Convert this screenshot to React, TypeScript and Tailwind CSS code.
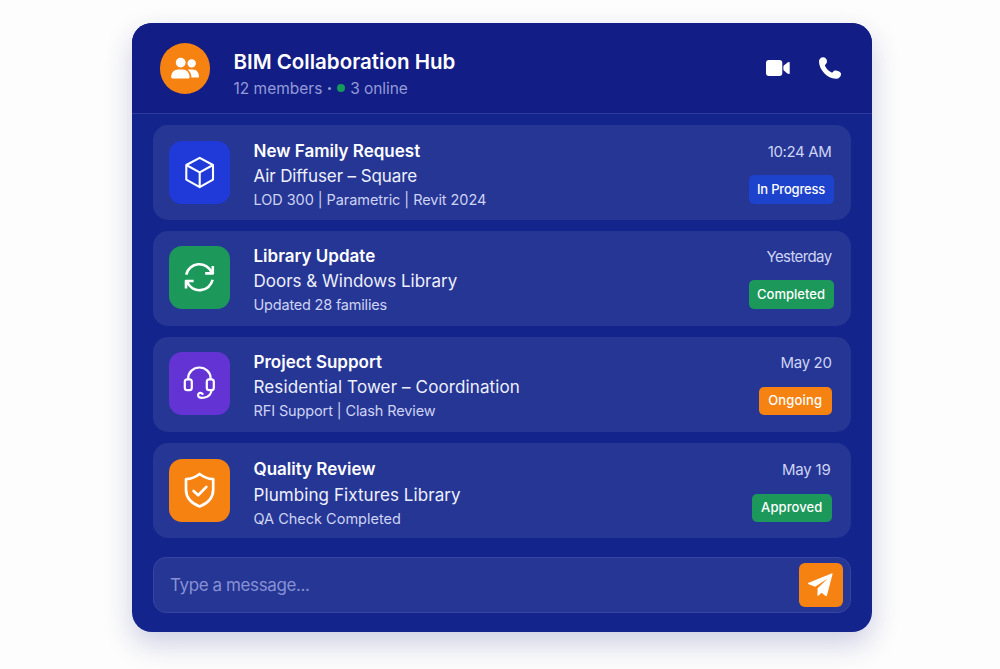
import type { ReactNode } from "react"

type Item = {
  title: string
  subtitle: string
  detail: string
  time: string
  status: string
  icon: ReactNode
  card: string
  tile: string
  textClass: string
  subtitleClass: string
  detailClass: string
  timeClass: string
  badge: string
}

function CubeIcon() {
  return (
    <svg viewBox="0 0 61 63" className="size-full" fill="none" stroke="white" strokeWidth="2.1" strokeLinejoin="round" strokeLinecap="round">
      <path d="M30.7 16.8 44 24v14.6l-13.3 7.6L17.3 38.6V24zM17.3 24l13.4 7.3L44 24M30.7 31.3v14.9" />
    </svg>
  )
}

function SyncIcon() {
  return (
    <svg viewBox="0 0 61 63" className="size-full" fill="none" stroke="white" strokeWidth="2.6" strokeLinejoin="round">
      <path d="M17.2 28.6A13.4 13.4 0 0 1 42.6 26.4M43.8 20v7.4h-7.6" />
      <path d="M43.6 33.8A13.4 13.4 0 0 1 18.2 36M17 42.4V35h7.6" />
    </svg>
  )
}

function HeadsetIcon() {
  return (
    <svg viewBox="0 0 61 63" className="size-full" fill="none" stroke="white" strokeWidth="2.2" strokeLinecap="round" strokeLinejoin="round">
      <rect x="15.8" y="27.3" width="7" height="10.9" rx="2.4" />
      <rect x="37.8" y="27.3" width="7" height="10.9" rx="2.4" />
      <path d="M19.2 27v-.7a11.2 10.8 0 0 1 22.4 0v.7" />
      <path d="M42.6 38.4c-.6 3.8-3 6.300-6.800 7.100-2 .4-4.400.5-5.600-.2-1.500-.9-1.600-3.500.2-4.300 1.300-.5 2.200.1 3.200.8" />
    </svg>
  )
}

function ShieldIcon() {
  return (
    <svg viewBox="0 0 61 63" className="size-full" fill="none" stroke="white" strokeWidth="2.7" strokeLinecap="round" strokeLinejoin="round">
      <path d="M30.6 15c4 3.1 8.6 4.8 13.6 5.2v10.3c0 7.8-5.2 13.7-13.6 17-8.4-3.3-13.6-9.2-13.6-17V20.2c5-.4 9.6-2.1 13.6-5.2z" />
      <path d="m24.6 31.9 4.6 4.3 8.1-8.3" />
    </svg>
  )
}

function PeopleIcon() {
  return (
    <svg viewBox="0 0 50 51" className="size-full" fill="white">
      <circle cx="20.7" cy="19.6" r="4.9" />
      <circle cx="31.7" cy="20.4" r="4.2" />
      <path d="M11.2 34.2c0-4.7 3-7.6 7-7.6h4.2c4.2 0 7.2 2.9 7.2 7.6 0 .8-.4 1.200-1.200 1.200h-16c-.8 0-1.200-.4-1.200-1.200z" />
      <path d="M27.800 26.800c.8-.3 1.500-.4 2.600-.4h2.200c3.800 0 6.400 2.800 6.400 7 0 .8-.3 1.200-1.100 1.200h-6.500c0-3.300-1.300-6.200-3.600-7.800z" />
    </svg>
  )
}

function VideoIcon() {
  return (
    <svg viewBox="0 0 24 16" className="h-4 w-6" fill="white">
      <rect width="16.3" height="16" rx="3" />
      <path d="M17.7 5.6c2-1.500 3.500-3 4.900-3.600.6-.3 1.100 0 1.100.7v10.600c0 .7-.5 1-1.100.7-1.400-.6-2.900-2.100-4.900-3.600-.5-.9-.5-3.900 0-4.800z" />
    </svg>
  )
}

function PhoneIcon() {
  return (
    <svg viewBox="0 0 22 22" className="ml-[29px] size-[22px]" fill="white">
      <path d="M0 4.600C0 2 1.900.2 4 .2 6.300.2 8 2 8 4.200c0 1.400-.6 2.400-1.500 3.200-.6.600-.7 1.100-.3 1.900 1.300 2.500 3.200 4.500 5.900 6 .7.4 1.200.3 1.800-.4.900-1 1.900-1.500 3.300-1.300 1.900.3 4.500 1.500 4.800 2.900.3 1.700-1.300 5.300-5.200 5.300C8.400 21.800 0 12.900 0 4.600z" />
    </svg>
  )
}

function SendIcon() {
  return (
    <svg viewBox="0 0 25 24" className="h-6 w-[25px]" fill="white">
      <path d="M.6 9.700 23.500.4c.8-.3 1.200.1 1 .9L19 22.300c-.3 1-.9 1.200-1.700.5l-3.700-3-3 2.700c-.7.6-1.200.4-1.200-.5l.2-6.800L19.800 5.600 7.200 13.800.7 11.200c-.9-.4-.9-1.100-.1-1.500z" />
    </svg>
  )
}

const items: Item[] = [
  {
    title: "New Family Request",
    subtitle: "Air Diffuser – Square",
    detail: "LOD 300 | Parametric | Revit 2024",
    time: "10:24 AM",
    status: "In Progress",
    icon: <CubeIcon />,
    card: "mb-[11px] h-[95px] pt-[14px]",
    tile: "mt-[2px] bg-[#203ad9]",
    textClass: "",
    subtitleClass: "tracking-[-0.11px]",
    detailClass: "tracking-[-0.06px]",
    timeClass: "tracking-[-0.35px]",
    badge: "mt-[11px] w-[85px] bg-[#1d42cc] tracking-[-0.2px]",
  },
  {
    title: "Library Update",
    subtitle: "Doors & Windows Library",
    detail: "Updated 28 families",
    time: "Yesterday",
    status: "Completed",
    icon: <SyncIcon />,
    card: "mb-[11px] h-[94.5px] pt-[13px]",
    tile: "mt-[2px] bg-[#1c985a]",
    textClass: "",
    subtitleClass: "",
    detailClass: "tracking-[-0.2px]",
    timeClass: "tracking-[-0.6px]",
    badge: "mt-[11px] w-[85px] bg-[#1c985a]",
  },
  {
    title: "Project Support",
    subtitle: "Residential Tower – Coordination",
    detail: "RFI Support | Clash Review",
    time: "May 20",
    status: "Ongoing",
    icon: <HeadsetIcon />,
    card: "mb-[11px] h-[95.5px] pt-[13px]",
    tile: "mt-[2px] bg-[#6333d4]",
    textClass: "pt-[0.5px]",
    subtitleClass: "tracking-[0.12px]",
    detailClass: "tracking-[-0.12px]",
    timeClass: "tracking-[-0.35px]",
    badge: "mt-[12px] mr-[1.5px] w-[73.5px] bg-[#f68212] tracking-[0.2px]",
  },
  {
    title: "Quality Review",
    subtitle: "Plumbing Fixtures Library",
    detail: "QA Check Completed",
    time: "May 19",
    status: "Approved",
    icon: <ShieldIcon />,
    card: "h-[95px] pt-[13.5px]",
    tile: "mt-[2px] bg-[#f68212]",
    textClass: "pt-[0.5px] [&>p]:relative [&>p]:top-px",
    subtitleClass: "tracking-[0.08px]",
    detailClass: "",
    timeClass: "pr-px tracking-[-0.2px]",
    badge: "mt-[12px] mr-[1.5px] w-[80.5px] bg-[#1c985a] tracking-[0.1px]",
  },
]

function Row({ item }: { item: Item }) {
  return (
    <li className={`flex items-start rounded-[15px] bg-[#263695] pr-[17px] pl-[16.5px] ${item.card}`}>
      <div className={`h-[63px] w-[61px] shrink-0 rounded-[13px] ${item.tile}`}>{item.icon}</div>
      <div className={`ml-[23.5px] flex-1 whitespace-nowrap text-white ${item.textClass}`}>
        <h2 className="text-[17px] leading-[25px] font-semibold">{item.title}</h2>
        <p className={`text-[17px] leading-[25px] text-[#edf0fc] ${item.subtitleClass}`}>{item.subtitle}</p>
        <p className={`text-[14.5px] leading-[21.5px] text-[#cdd3f3] ${item.detailClass}`}>{item.detail}</p>
      </div>
      <div className="flex flex-col items-end">
        <span className={`mr-[2px] text-[15px] leading-[25px] text-[#cdd3f3] ${item.timeClass}`}>{item.time}</span>
        <span className={`flex h-[28.5px] items-center justify-center rounded-[5px] text-[13px] font-medium whitespace-nowrap text-white ${item.badge}`}>
          {item.status}
        </span>
      </div>
    </li>
  )
}

export default function App() {
  return (
    <main className="h-[669px] overflow-hidden bg-[#fdfdfd] pt-[23px] pl-[131.5px] font-['Inter',sans-serif]">
      <div className="h-[609px] w-[740px] overflow-hidden rounded-[20px] bg-[#13248c] shadow-[0_12px_28px_rgba(30,40,130,0.22)]">
        <header className="flex h-[91px] items-center border-b border-[#2c3a9c] bg-[#121d85] pr-[31px] pl-[28.5px]">
          <div className="h-[51px] w-[50px] rounded-full bg-[#f68212]">
            <PeopleIcon />
          </div>
          <div className="ml-[23.5px] flex-1 pt-[12px]">
            <h1 className="text-[20.5px] leading-[28px] font-semibold text-white">BIM Collaboration Hub</h1>
            <p className="flex items-center text-[15.5px] leading-[25px] text-[#929bd8]">
              12 members
              <span className="ml-[6px] size-[3px] rounded-full bg-[#929bd8]" />
              <span className="mr-[5px] ml-[6px] size-[8px] rounded-full bg-[#159a5b]" />
              <span className="tracking-[-0.1px]">3 online</span>
            </p>
          </div>
          <VideoIcon />
          <PhoneIcon />
        </header>
        <ul className="px-[21px] pt-[11px]">
          {items.map((item) => (
            <Row key={item.title} item={item} />
          ))}
        </ul>
        <div className="mx-[21px] mt-[18.5px] flex h-[56px] items-center rounded-[13px] border border-[#3645a3] bg-[#263695] pr-[7px] pl-[16.5px]">
          <span className="flex-1 pt-[3px] text-[17px] tracking-[-0.4px] text-[#8791d3]">Type a message...</span>
          <button className="flex h-[44px] w-[44px] items-center justify-center rounded-[6px] bg-[#f68212]">
            <SendIcon />
          </button>
        </div>
      </div>
    </main>
  )
}
